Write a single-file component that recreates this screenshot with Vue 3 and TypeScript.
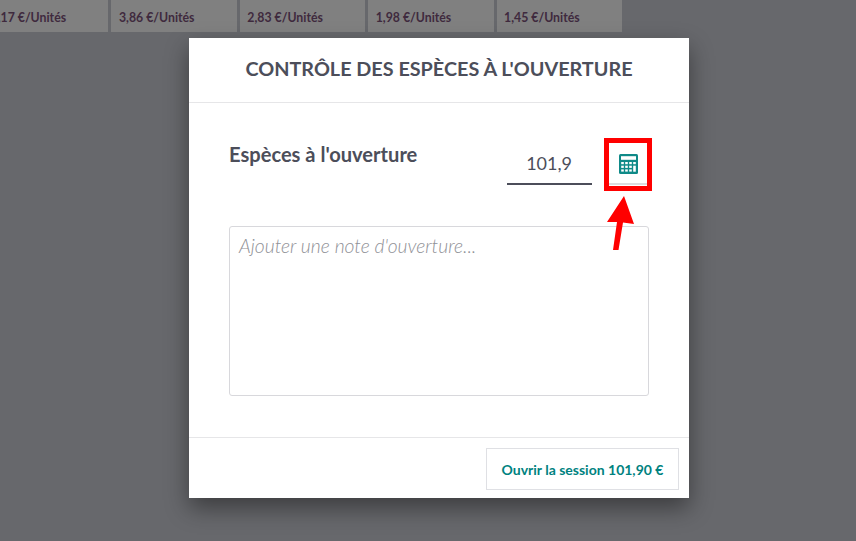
<script setup lang="ts">
const prices = ['2,17 €/Unités', '3,86 €/Unités', '2,83 €/Unités', '1,98 €/Unités', '1,45 €/Unités']
// calculator buttons: 4 columns, 3 rows, the last column's bottom key is a tall one
const keys: [number, number, number][] = [
  [2.2, 8, 2.2], [6.2, 8, 2.2], [10.2, 8, 2.2], [14.2, 8, 2.2],
  [2.2, 11.7, 2.2], [6.2, 11.7, 2.2], [10.2, 11.7, 2.2], [14.2, 11.7, 6],
  [2.2, 15.4, 2.2], [6.2, 15.4, 2.2], [10.2, 15.4, 2.2]
]
</script>

<template>
  <div class="screen">
    <div class="products">
      <div v-for="price in prices" :key="price" class="product">{{ price }}</div>
    </div>

    <div class="backdrop">
      <div class="modal">
        <header class="modal-header">CONTRÔLE DES ESPÈCES À L'OUVERTURE</header>

        <main class="modal-body">
          <div class="cash-row">
            <span class="cash-label">Espèces à l'ouverture</span>
            <div class="cash-input">101,9</div>
            <div class="calc-btn">
              <svg width="19" height="20" viewBox="0 0 19 20">
                <rect width="19" height="20" rx="1.5" fill="#0f8a88" />
                <rect x="2" y="2.2" width="15" height="3.6" fill="#fff" />
                <rect v-for="k in keys" :key="k.join()" :x="k[0]" :y="k[1]" width="2.6" :height="k[2]" fill="#fff" />
              </svg>
            </div>
          </div>

          <div class="note">Ajouter une note d'ouverture...</div>
        </main>

        <footer class="modal-footer">
          <button class="open-btn">Ouvrir la session 101,90 €</button>
        </footer>
      </div>
    </div>

    <div class="highlight"></div>
    <svg class="arrow" width="30" height="56" viewBox="0 0 30 56">
      <path d="M17 0 L27 28 L16 26.5 L11.5 54 L6 54 L10 26 L0 26 Z" fill="#ff0000" />
    </svg>
  </div>
</template>

<style scoped>
.screen {
  position: relative;
  width: 856px;
  height: 541px;
  overflow: hidden;
  background: #67686c;
  font-family: Lato, "Open Sans", sans-serif;
}

.products {
  display: flex;
  gap: 3px;
  margin-left: -17px;
}

.product {
  width: 125.4px;
  height: 32px;
  box-sizing: border-box;
  padding-top: 10px;
  padding-left: 7.5px;
  background: #808080;
  color: #3f2a3e;
  font-size: 12.3px;
  font-weight: 700;
  line-height: 15px;
  white-space: nowrap;
}

.backdrop {
  position: absolute;
  inset: 0;
  display: flex;
  padding: 38px 0 0 189px;
}

.modal {
  width: 500px;
  height: 460px;
  display: flex;
  flex-direction: column;
  background: #fff;
  box-shadow: 0 10px 22px rgba(0, 0, 0, 0.42);
}

.modal-header {
  height: 65px;
  box-sizing: border-box;
  border-bottom: 1px solid #e6e6e8;
  text-align: center;
  line-height: 61px;
  font-size: 19.8px;
  font-weight: 700;
  color: #4c4e5a;
}

.modal-body {
  flex: 1;
  padding: 0 40px;
}

.cash-row {
  display: flex;
  align-items: flex-start;
  margin-top: 40px;
  height: 83px;
}

.cash-label {
  flex: none;
  width: 278px;
  font-size: 20.1px;
  font-weight: 700;
  line-height: 22px;
  color: #4c4e5a;
}

.cash-input {
  flex: none;
  width: 85px;
  height: 42px;
  box-sizing: border-box;
  padding-right: 20px;
  border-bottom: 2px solid #4c4e5a;
  text-align: right;
  font-size: 18px;
  line-height: 40px;
  color: #4c4e5a;
}

.calc-btn {
  flex: none;
  width: 46px;
  height: 42px;
  box-sizing: border-box;
  margin-left: 13px;
  padding-top: 2px;
  display: flex;
  align-items: center;
  justify-content: center;
  border-bottom: 2px solid #dcdcdf;
}

.note {
  height: 170px;
  box-sizing: border-box;
  padding: 6px 9px;
  border: 1px solid #d8d8dc;
  border-radius: 3px;
  font-size: 19.3px;
  font-style: italic;
  font-weight: 300;
  line-height: 26px;
  color: #8f9096;
}

.modal-footer {
  height: 61px;
  box-sizing: border-box;
  border-top: 1px solid #e6e6e8;
  display: flex;
  justify-content: flex-end;
  padding: 10px 10px 0 0;
}

.open-btn {
  width: 193px;
  height: 42px;
  border: 1px solid #dfe0e4;
  background: #fff;
  color: #00827f;
  font-family: inherit;
  font-size: 14px;
  font-weight: 700;
}

.highlight {
  position: absolute;
  left: 604px;
  top: 138px;
  width: 48px;
  height: 53px;
  box-sizing: border-box;
  border: 5px solid #ff0000;
}

.arrow {
  position: absolute;
  left: 607px;
  top: 196px;
}
</style>
